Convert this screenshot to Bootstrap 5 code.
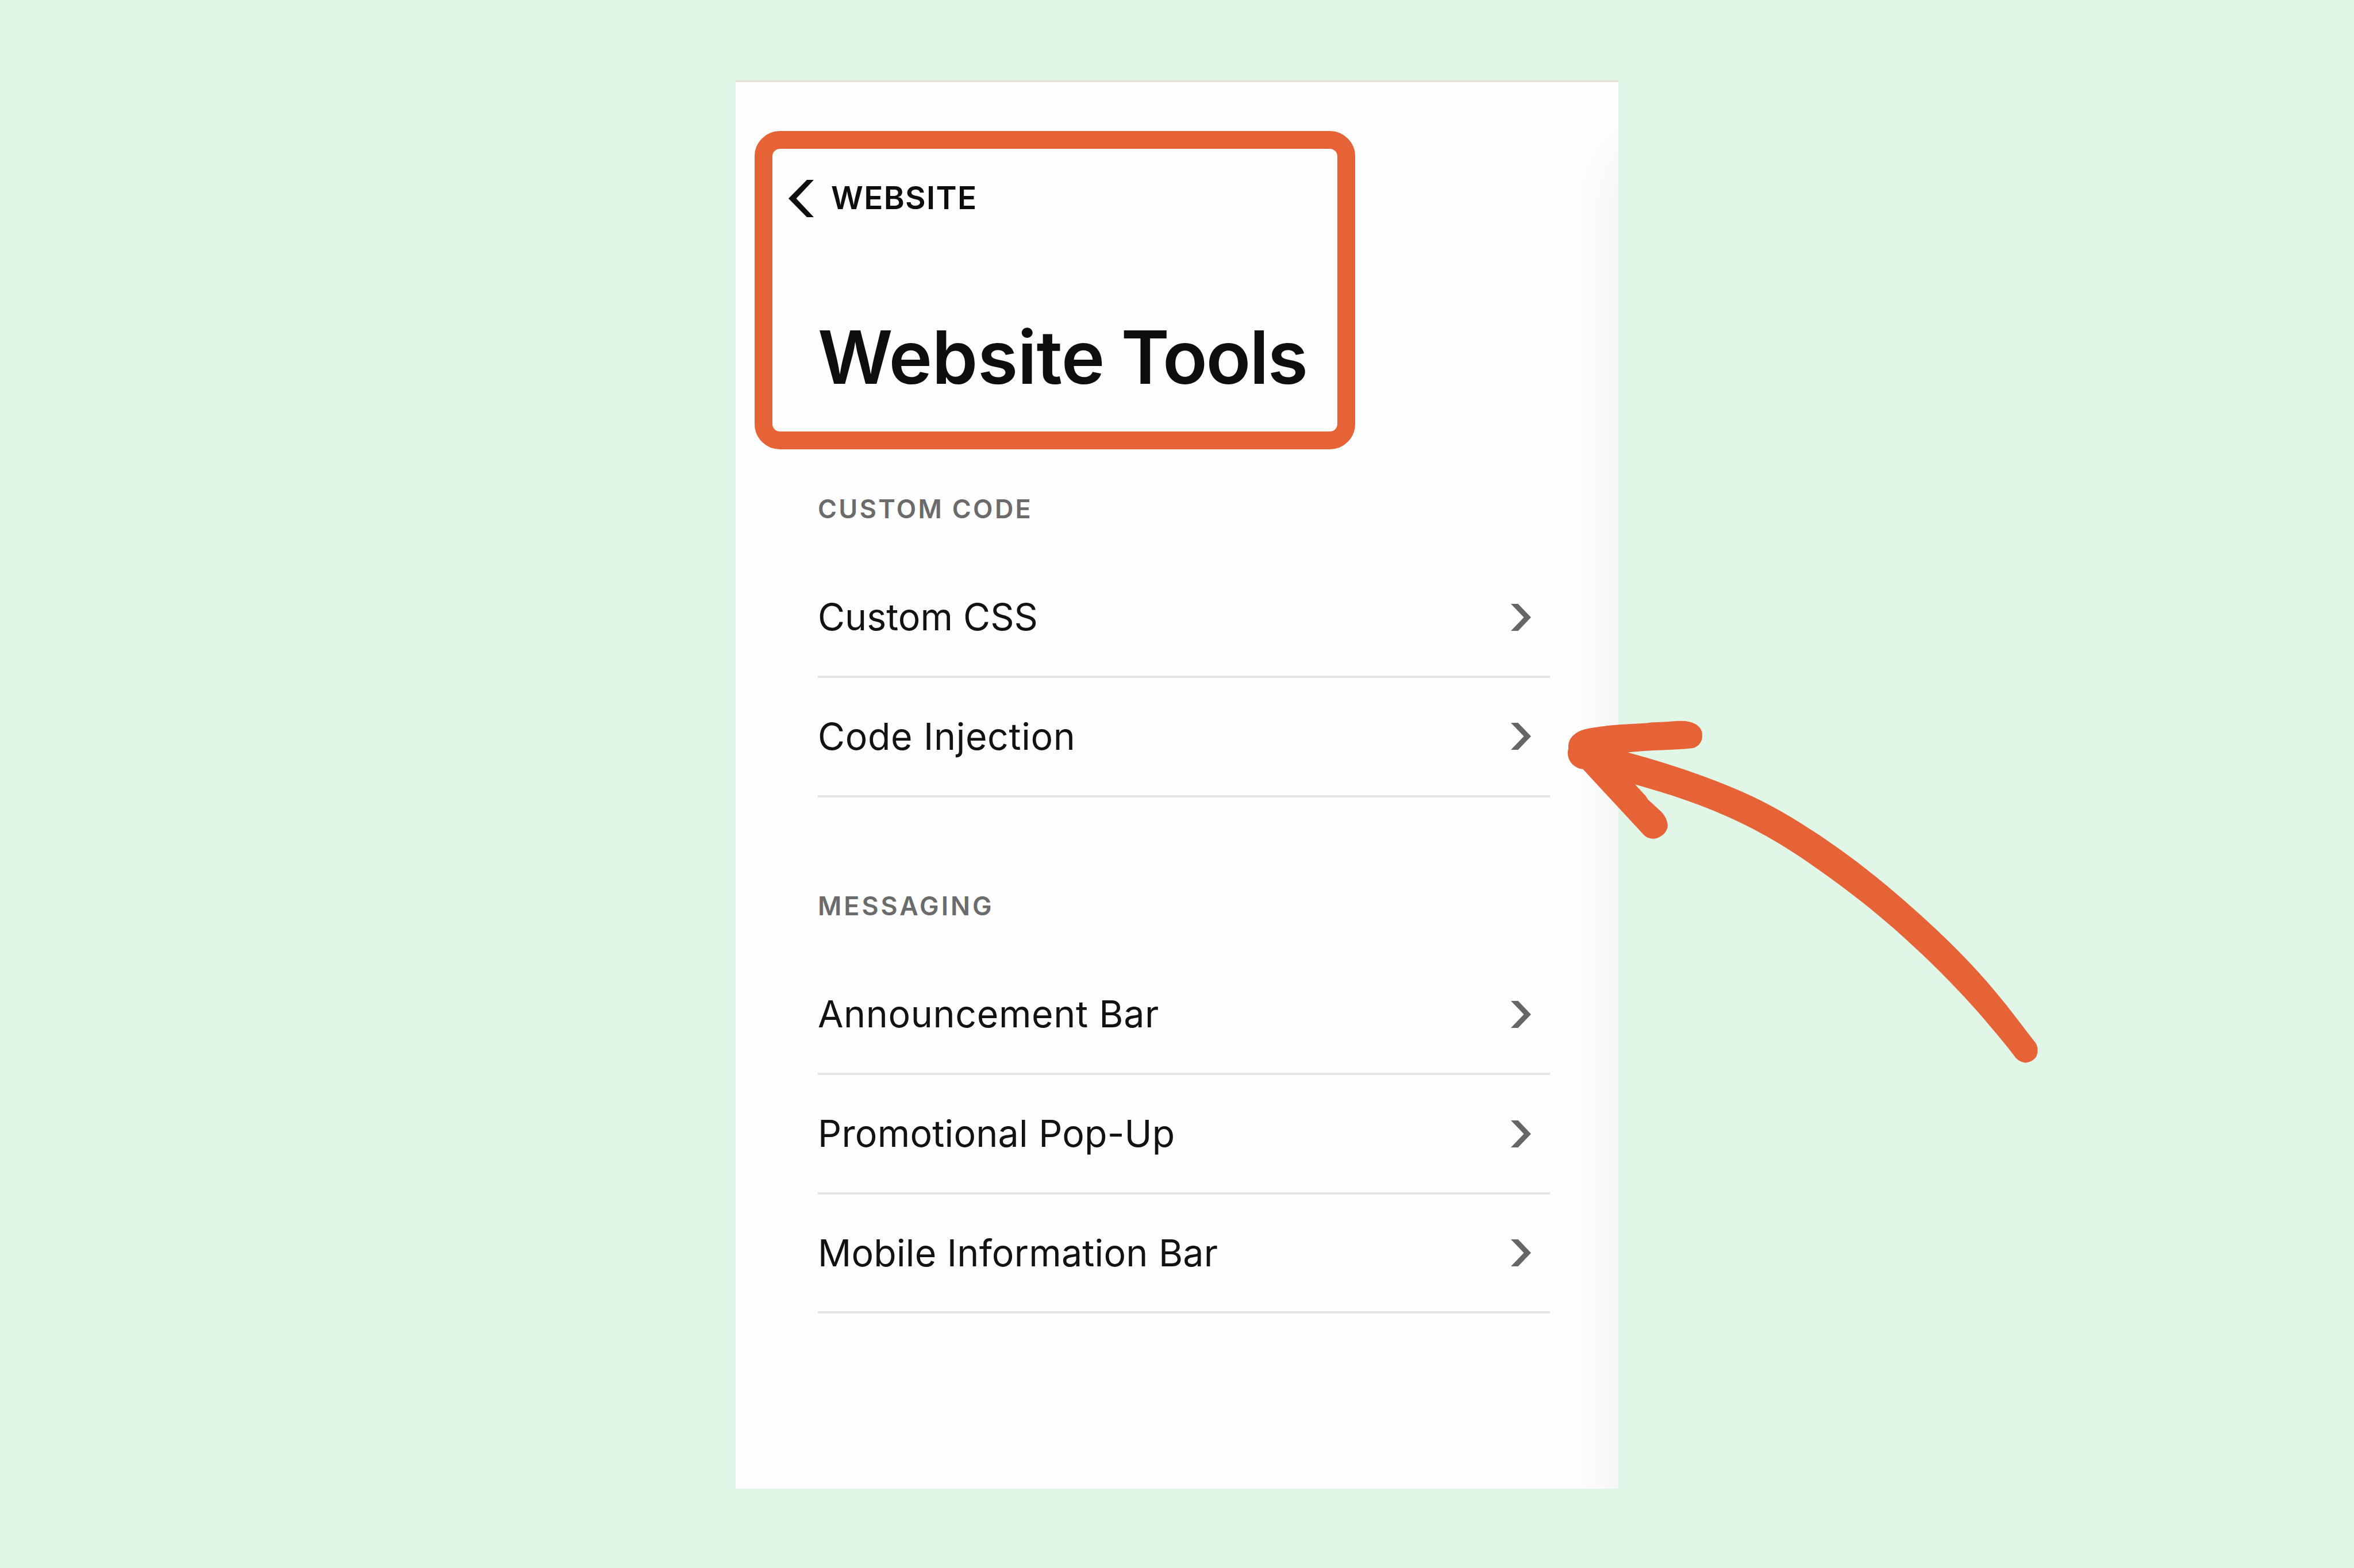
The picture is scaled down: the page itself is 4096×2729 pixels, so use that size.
<!DOCTYPE html>
<html lang="en">
<head>
    <meta charset="UTF-8">
    <meta name="viewport" content="width=device-width, initial-scale=1.0">
    <title>Website Tools</title>
    <link href="https://cdn.jsdelivr.net/npm/bootstrap@5.3.0/dist/css/bootstrap.min.css" rel="stylesheet">
    <style>
        body {
            background-color: #e1f6e6;
            font-family: Inter, "Liberation Sans", sans-serif;
            color: #0e0e0e;
        }
        .stage {
            width: 4096px;
            height: 2729px;
        }
        .tools-panel {
            width: 1536px;
            height: 2452px;
            padding-top: 85px;
            background-color: #fefefe;
            border-top: 4px solid #e0e4d5;
        }
        /* soft shadow cast by the preview pane on the right */
        .edge-shadow {
            top: 125px;
            left: 100%;
            width: 400px;
            height: 2800px;
            box-shadow: 0 0 102px rgba(0, 0, 0, 0.07);
        }
        .highlight {
            width: 1045px;
            height: 554px;
            margin-left: 33px;
            padding: 54px 0 0 28px;
            border: 31px solid #e66337;
            border-radius: 44px;
        }
        .back-link {
            height: 66px;
            gap: 30px;
            font-size: 54.8px;
            font-weight: 600;
            line-height: 63px;
            letter-spacing: 1.3px;
            color: inherit;
        }
        .back-link span {
            padding-bottom: 3px;
        }
        .tools-title {
            margin: 166px 0 0 51px;
            font-size: 128px;
            font-weight: 600;
            line-height: 154px;
            letter-spacing: -0.6px;
            word-spacing: -3px;
        }
        .tools-title span {
            letter-spacing: -2.2px;
        }
        .tools-section {
            margin: 77px 119.5px 0 143px;
        }
        .tools-section + .tools-section {
            margin-top: 162px;
        }
        .section-label {
            margin-bottom: 60px;
            font-size: 44.8px;
            font-weight: 600;
            line-height: 54px;
            letter-spacing: 3.35px;
            color: #6b6b6b;
        }
        .tool-item {
            height: 207.6px;
            padding-right: 33px;
            border-bottom: 4px solid #e4e4e4;
            font-size: 64.5px;
            line-height: 78px;
            color: #121212;
        }
        .track-1 { letter-spacing: 0.2px; }
        .track-2 { letter-spacing: 0.6px; }
        .track-3 { letter-spacing: 4px; }
        .arrow {
            left: 2679.5px;
            top: 1211.7px;
        }
    </style>
</head>
<body>
    <main class="stage position-relative d-flex align-items-center justify-content-center overflow-hidden">
        <div class="tools-panel position-relative overflow-hidden">
            <div class="edge-shadow position-absolute"></div>

            <header class="highlight">
                <a href="#" class="back-link d-flex align-items-center text-decoration-none">
                    <svg width="44" height="65" viewBox="0 0 44 65" fill="#0e0e0e"><path d="M32 0H44L13.5 32.5L44 65H32L0 32.5Z"/></svg>
                    <span>WEBSITE</span>
                </a>
                <h1 class="tools-title text-nowrap">Website <span>Tools</span></h1>
            </header>

            <section class="tools-section">
                <h2 class="section-label">CUSTOM CODE</h2>
                <ul class="list-unstyled mb-0">
                    <li class="tool-item d-flex align-items-center justify-content-between">
                        <span>Custom CSS</span>
                        <svg width="35" height="47" viewBox="0 0 35 47" fill="#666"><path d="M0 0H12.5L35 23.5L12.5 47H0L22.5 23.5Z"/></svg>
                    </li>
                    <li class="tool-item d-flex align-items-center justify-content-between">
                        <span class="track-2">Code Injection</span>
                        <svg width="35" height="47" viewBox="0 0 35 47" fill="#666"><path d="M0 0H12.5L35 23.5L12.5 47H0L22.5 23.5Z"/></svg>
                    </li>
                </ul>
            </section>

            <section class="tools-section">
                <h2 class="section-label track-3">MESSAGING</h2>
                <ul class="list-unstyled mb-0">
                    <li class="tool-item d-flex align-items-center justify-content-between">
                        <span class="track-2">Announcement Bar</span>
                        <svg width="35" height="47" viewBox="0 0 35 47" fill="#666"><path d="M0 0H12.5L35 23.5L12.5 47H0L22.5 23.5Z"/></svg>
                    </li>
                    <li class="tool-item d-flex align-items-center justify-content-between">
                        <span class="track-1">Promotional Pop-Up</span>
                        <svg width="35" height="47" viewBox="0 0 35 47" fill="#666"><path d="M0 0H12.5L35 23.5L12.5 47H0L22.5 23.5Z"/></svg>
                    </li>
                    <li class="tool-item d-flex align-items-center justify-content-between">
                        <span class="track-1">Mobile Information Bar</span>
                        <svg width="35" height="47" viewBox="0 0 35 47" fill="#666"><path d="M0 0H12.5L35 23.5L12.5 47H0L22.5 23.5Z"/></svg>
                    </li>
                </ul>
            </section>
        </div>

        <!-- hand-drawn arrow pointing at Code Injection -->
        <svg class="arrow position-absolute" width="904" height="683" viewBox="0 0 904 683" fill="#e66337">
            <path d="M49 90.6V85C50 76 54 70 61 65C70 58 83 55.5 95.2 54C108 52 122 50.2 136.7 49.2L185 46.5L194 45.2L215 44.4L239.5 42.7C250 42.5 259 43 265.4 46.1C274 49.5 280 55 281.5 63.1Q282.5 69 281.3 75C279 82 274 88 265.4 90.1C258 91.5 230 92.8 219 93.3C202 93.5 180 95 152.3 97.5C196.3 109.5 240.5 123 284.5 139.3C318.1 151.7 351.8 165 385.4 182C430 204.9 474.7 233 519.3 264.7C571.3 301.6 623.1 344.9 675.1 392.7C720.3 434.1 765.5 479.7 810.7 536.8C827.6 558.1 844.6 581 861.5 602.6C864.5 607 865.5 611 865.5 616C865.5 621 864.5 624 862.6 627.8C858 634 851 637.4 844.2 637.4C836 637 829 632 825.1 626.1L814.7 612.6C789.7 581.4 763.6 551 738.6 523.8C698.6 480.2 657.4 441.2 617.4 405.8C566.4 360.7 515.5 323 464.5 287.8C428 262.6 391.4 241 354.9 222.9C320.9 206.1 286.1 192 252.1 180.2C223.1 170 194 161.7 165 153.3L183.5 173.3L187.5 179.5L210.6 200.7C217 207 221 216 221.9 224.2C221.5 232 217 239 210.6 242.9C205 246.5 201 247.7 196.2 247.7C189 247.5 184 245 180 240.8L74.4 126.7C68 126 62 123.5 57.7 119.7C51 114 48 106 47.9 99.3C47.9 96 48.5 93 49 90.6Z"/>
        </svg>
    </main>
    <script src="https://cdn.jsdelivr.net/npm/bootstrap@5.3.0/dist/js/bootstrap.bundle.min.js"></script>
</body>
</html>
